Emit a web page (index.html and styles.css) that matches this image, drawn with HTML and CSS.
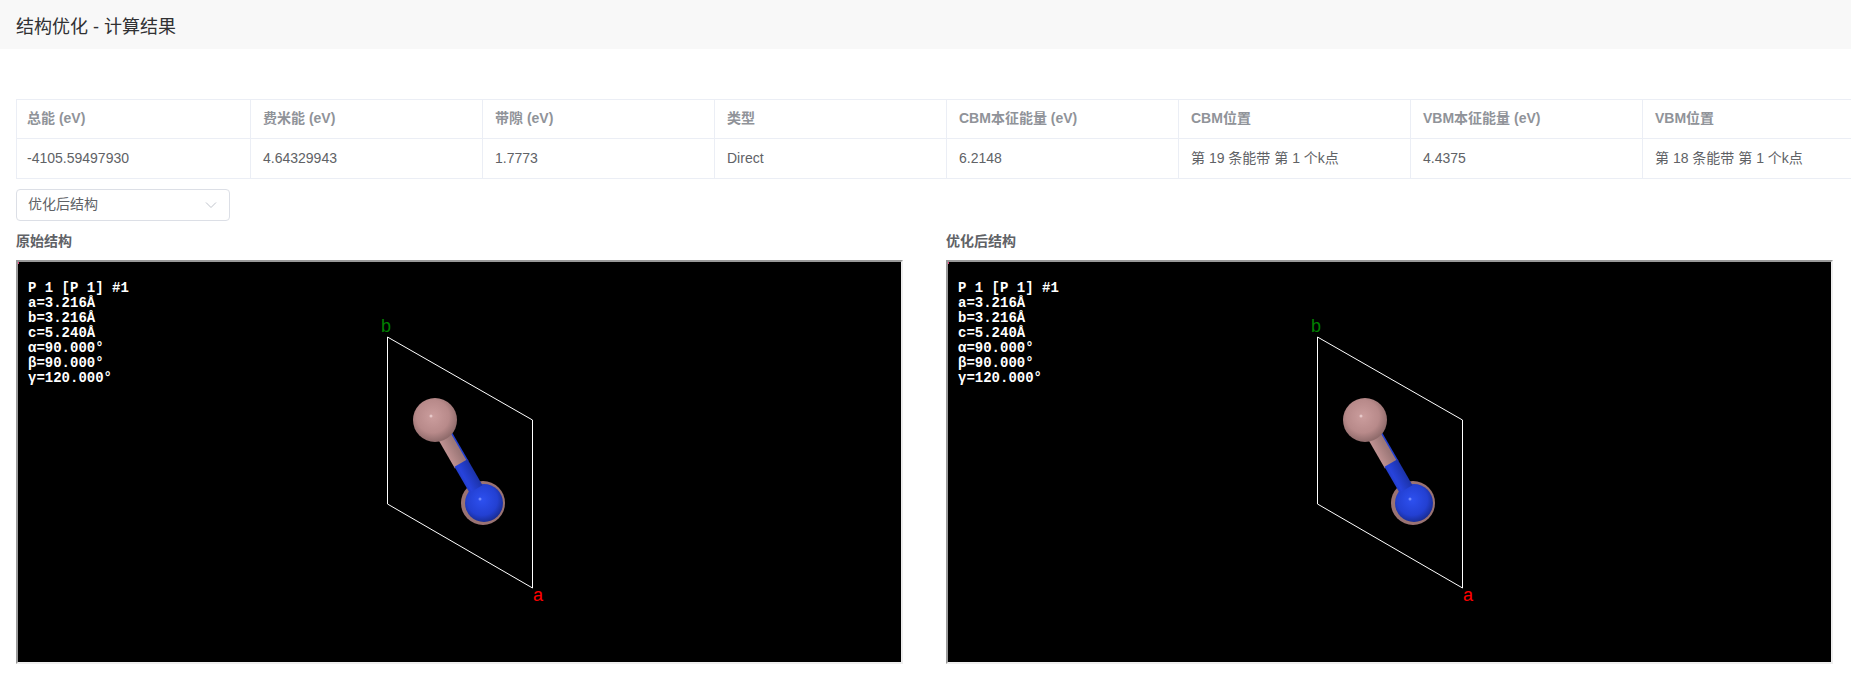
FILE: index.html
```html
<!DOCTYPE html>
<html lang="zh-CN">
<head>
<meta charset="utf-8">
<title>结构优化 - 计算结果</title>
<link rel="stylesheet" href="styles.css">
</head>
<body>
<header class="page-header">结构优化 - 计算结果</header>
<main class="content">
  <div class="table-wrap">
    <table class="result-table">
      <colgroup><col class="col-first"><col class="col"><col class="col"><col class="col"><col class="col"><col class="col"><col class="col"><col class="col"></colgroup>
      <thead>
        <tr><th>总能 (eV)</th><th>费米能 (eV)</th><th>带隙 (eV)</th><th>类型</th><th>CBM本征能量 (eV)</th><th>CBM位置</th><th>VBM本征能量 (eV)</th><th>VBM位置</th></tr>
      </thead>
      <tbody>
        <tr><td>-4105.59497930</td><td>4.64329943</td><td>1.7773</td><td>Direct</td><td>6.2148</td><td>第 19 条能带 第 1 个k点</td><td>4.4375</td><td>第 18 条能带 第 1 个k点</td></tr>
      </tbody>
    </table>
  </div>
  <div class="select">
    <span class="select-value">优化后结构</span>
    <svg class="chevron" width="12" height="8" viewBox="0 0 12 8"><path d="M1 1.5 L6 6.5 L11 1.5" fill="none" stroke="#c0c4cc" stroke-width="1"/></svg>
  </div>
  <div class="viewers">
    <section>
      <h3 class="viewer-title">原始结构</h3>
      <div class="viewer">
        <pre class="info"><span class="info-first">P 1 [P 1] #1</span>
a=3.216Å
b=3.216Å
c=5.240Å
α=90.000°
β=90.000°
γ=120.000°</pre>
        <svg class="scene" width="883" height="400" viewBox="0 0 883 400">
          <defs>
            <radialGradient id="pink" cx="0.45" cy="0.42" r="0.62">
              <stop offset="0" stop-color="#cb9d9d"/><stop offset="0.6" stop-color="#b88a8a"/><stop offset="1" stop-color="#866464"/>
            </radialGradient>
            <radialGradient id="blue" cx="0.45" cy="0.42" r="0.62">
              <stop offset="0" stop-color="#2d50f0"/><stop offset="0.65" stop-color="#2340d2"/><stop offset="1" stop-color="#16298c"/>
            </radialGradient>
            <linearGradient id="bond-pink" gradientUnits="userSpaceOnUse" x1="411" y1="178" x2="429" y2="168">
              <stop offset="0" stop-color="#9c7878"/><stop offset="0.45" stop-color="#bd9090"/><stop offset="1" stop-color="#9c7878"/>
            </linearGradient>
            <linearGradient id="bond-blue" gradientUnits="userSpaceOnUse" x1="435" y1="214" x2="453" y2="204">
              <stop offset="0" stop-color="#1c33ab"/><stop offset="0.45" stop-color="#2743dc"/><stop offset="1" stop-color="#1c33ab"/>
            </linearGradient>
          </defs>
          <rect x="0" y="0" width="1" height="2" fill="#e0407a"/>
          <path d="M369.5 75 L514.5 158 L514.5 326 L369.5 242 Z" fill="none" stroke="#fff" stroke-width="1"/>
          <text class="axis axis-b" x="363" y="70">b</text>
          <text class="axis axis-a" x="515" y="339">a</text>
          <circle cx="465" cy="241" r="22" fill="#9a7373"/>
          <circle cx="466" cy="241" r="19" fill="url(#blue)"/>
          <circle cx="462" cy="237" r="1.5" fill="#6f88ff"/>
          <line x1="417" y1="158" x2="443" y2="203" stroke="#2340d2" stroke-width="14" transform="translate(1.5 -0.5)"/>
          <line x1="417" y1="158" x2="443" y2="203" stroke="url(#bond-pink)" stroke-width="14"/>
          <line x1="443" y1="201" x2="458" y2="227" stroke="url(#bond-blue)" stroke-width="15"/>
          <circle cx="417" cy="158" r="22" fill="url(#pink)"/>
          <circle cx="413" cy="154" r="1.5" fill="#e6c8c8"/>
        </svg>
      </div>
    </section>
    <section>
      <h3 class="viewer-title">优化后结构</h3>
      <div class="viewer">
        <pre class="info"><span class="info-first">P 1 [P 1] #1</span>
a=3.216Å
b=3.216Å
c=5.240Å
α=90.000°
β=90.000°
γ=120.000°</pre>
        <svg class="scene" width="883" height="400" viewBox="0 0 883 400">
          <rect x="0" y="0" width="1" height="2" fill="#e0407a"/>
          <path d="M369.5 75 L514.5 158 L514.5 326 L369.5 242 Z" fill="none" stroke="#fff" stroke-width="1"/>
          <text class="axis axis-b" x="363" y="70">b</text>
          <text class="axis axis-a" x="515" y="339">a</text>
          <circle cx="465" cy="241" r="22" fill="#9a7373"/>
          <circle cx="466" cy="241" r="19" fill="url(#blue)"/>
          <circle cx="462" cy="237" r="1.5" fill="#6f88ff"/>
          <line x1="417" y1="158" x2="443" y2="203" stroke="#2340d2" stroke-width="14" transform="translate(1.5 -0.5)"/>
          <line x1="417" y1="158" x2="443" y2="203" stroke="url(#bond-pink)" stroke-width="14"/>
          <line x1="443" y1="201" x2="458" y2="227" stroke="url(#bond-blue)" stroke-width="15"/>
          <circle cx="417" cy="158" r="22" fill="url(#pink)"/>
          <circle cx="413" cy="154" r="1.5" fill="#e6c8c8"/>
        </svg>
      </div>
    </section>
  </div>
</main>
</body>
</html>
```
FILE: styles.css
```css
* { box-sizing: border-box; }
html, body { margin: 0; padding: 0; background: #fff; overflow: hidden; }
body { font-family: "Liberation Sans", "Noto Sans CJK SC", sans-serif; font-size: 14px; color: #606266; }

.page-header {
  height: 49px;
  padding: 0 16px;
  background: #f8f8f8;
  color: #303133;
  font-size: 18px;
  line-height: 54px;
}

.content { padding: 50px 0 0 16px; }

.table-wrap { overflow: hidden; width: 1835px; }
.result-table {
  border-collapse: collapse;
  table-layout: fixed;
  width: 1858px;
}
.col-first { width: 234px; }
.col { width: 232px; }
.result-table th, .result-table td {
  border: 1px solid #ebeef5;
  padding: 0 0 0 12px;
  line-height: 20px;
  text-align: left;
  white-space: nowrap;
  overflow: hidden;
}
.result-table th { height: 39px; padding-bottom: 3px; color: #909399; font-weight: 700; }
.result-table td { height: 40px; padding-bottom: 2px; color: #606266; }
.result-table th:first-child, .result-table td:first-child { padding-left: 10px; }

.select {
  width: 214px;
  height: 32px;
  margin-top: 10px;
  padding: 0 12px 0 11px;
  border: 1px solid #dcdfe6;
  border-radius: 4px;
  display: flex;
  align-items: center;
  justify-content: space-between;
  color: #606266;
}
.select-value { line-height: 20px; padding-bottom: 2px; }

.viewers {
  display: grid;
  grid-template-columns: 887px 887px;
  column-gap: 43px;
  margin-top: 10px;
}
.viewer-title {
  margin: 0 0 9px;
  font-size: 14px;
  line-height: 20px;
  font-weight: 700;
  color: #606266;
}
.viewer {
  position: relative;
  height: 404px;
  border: 2px solid;
  border-color: #9a9a9a #eeeeee #eeeeee #9a9a9a;
  background: #000;
}
.scene { display: block; }
.info {
  position: absolute;
  left: 10px;
  top: 19px;
  margin: 0;
  font-family: "Liberation Mono", "DejaVu Sans Mono", monospace;
  font-size: 14px;
  line-height: 15px;
  font-weight: 700;
  color: #fff;
}
.axis { font-family: "Liberation Sans", sans-serif; font-size: 18px; }
.axis-b { fill: #008000; }
.axis-a { fill: #ff0000; }
```
